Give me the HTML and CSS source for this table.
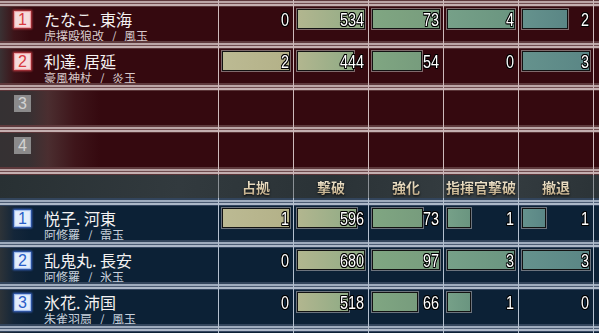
FILE: index.html
```html
<!DOCTYPE html>
<html lang="ja">
<head>
<meta charset="utf-8">
<title>Score board</title>
<link rel="stylesheet" href="styles.css">
</head>
<body>
<div class="board">
  <section class="team red">
    <div class="sep first"><i></i><i></i><i></i><i></i><i></i><i></i><i></i></div>
    <div class="row">
      <div class="name"><span class="rank">1</span><div class="who"><div class="pn">たなこ. 東海</div><div class="sub">虎撲殴狼改 / 風玉</div></div></div>
      <div class="c"><span class="n">0</span></div>
      <div class="c"><span class="bar b2" style="width:68px"></span><span class="n">534</span></div>
      <div class="c"><span class="bar b3" style="width:68px"></span><span class="n">73</span></div>
      <div class="c"><span class="bar b4" style="width:68px"></span><span class="n">4</span></div>
      <div class="c"><span class="bar b5" style="width:46px"></span><span class="n">2</span></div>
      <div class="c end"></div>
    </div>
    <div class="sep"><i></i><i></i><i></i><i></i><i></i><i></i><i></i></div>
    <div class="row">
      <div class="name"><span class="rank">2</span><div class="who"><div class="pn">利達. 居延</div><div class="sub">豪風神杖 / 炎玉</div></div></div>
      <div class="c"><span class="bar b1" style="width:68px"></span><span class="n">2</span></div>
      <div class="c"><span class="bar b2" style="width:57px"></span><span class="n">444</span></div>
      <div class="c"><span class="bar b3" style="width:50px"></span><span class="n">54</span></div>
      <div class="c"><span class="n">0</span></div>
      <div class="c"><span class="bar b5" style="width:68px"></span><span class="n">3</span></div>
      <div class="c end"></div>
    </div>
    <div class="sep"><i></i><i></i><i></i><i></i><i></i><i></i><i></i></div>
    <div class="row empty">
      <div class="name"><span class="rank">3</span></div>
      <div class="c"></div><div class="c"></div><div class="c"></div><div class="c"></div><div class="c"></div>
      <div class="c end"></div>
    </div>
    <div class="sep"><i></i><i></i><i></i><i></i><i></i><i></i><i></i></div>
    <div class="row empty">
      <div class="name"><span class="rank">4</span></div>
      <div class="c"></div><div class="c"></div><div class="c"></div><div class="c"></div><div class="c"></div>
      <div class="c end"></div>
    </div>
    <div class="sep"><i></i><i></i><i></i><i></i><i></i><i></i><i></i></div>
  </section>

  <div class="head">
    <div class="hname"></div>
    <div class="h"><span class="lbl">占拠</span></div>
    <div class="h"><span class="lbl">撃破</span></div>
    <div class="h"><span class="lbl">強化</span></div>
    <div class="h"><span class="lbl">指揮官撃破</span></div>
    <div class="h"><span class="lbl">撤退</span></div>
    <div class="h end"></div>
  </div>

  <section class="team blue">
    <div class="sep"><i></i><i></i><i></i><i></i><i></i><i></i><i></i></div>
    <div class="row">
      <div class="name"><span class="rank">1</span><div class="who"><div class="pn">悦子. 河東</div><div class="sub">阿修羅 / 雷玉</div></div></div>
      <div class="c"><span class="bar b1" style="width:68px"></span><span class="n">1</span></div>
      <div class="c"><span class="bar b2" style="width:60px"></span><span class="n">596</span></div>
      <div class="c"><span class="bar b3" style="width:51px"></span><span class="n">73</span></div>
      <div class="c"><span class="bar b4" style="width:24px"></span><span class="n">1</span></div>
      <div class="c"><span class="bar b5" style="width:24px"></span><span class="n">1</span></div>
      <div class="c end"></div>
    </div>
    <div class="sep"><i></i><i></i><i></i><i></i><i></i><i></i><i></i></div>
    <div class="row">
      <div class="name"><span class="rank">2</span><div class="who"><div class="pn">乱鬼丸. 長安</div><div class="sub">阿修羅 / 氷玉</div></div></div>
      <div class="c"><span class="n">0</span></div>
      <div class="c"><span class="bar b2" style="width:68px"></span><span class="n">680</span></div>
      <div class="c"><span class="bar b3" style="width:68px"></span><span class="n">97</span></div>
      <div class="c"><span class="bar b4" style="width:68px"></span><span class="n">3</span></div>
      <div class="c"><span class="bar b5" style="width:68px"></span><span class="n">3</span></div>
      <div class="c end"></div>
    </div>
    <div class="sep"><i></i><i></i><i></i><i></i><i></i><i></i><i></i></div>
    <div class="row">
      <div class="name"><span class="rank">3</span><div class="who"><div class="pn">氷花. 沛国</div><div class="sub">朱雀羽扇 / 風玉</div></div></div>
      <div class="c"><span class="n">0</span></div>
      <div class="c"><span class="bar b2" style="width:52px"></span><span class="n">518</span></div>
      <div class="c"><span class="bar b3" style="width:46px"></span><span class="n">66</span></div>
      <div class="c"><span class="bar b4" style="width:24px"></span><span class="n">1</span></div>
      <div class="c"><span class="n">0</span></div>
      <div class="c end"></div>
    </div>
    <div class="sep"><i></i><i></i><i></i><i></i><i></i><i></i><i></i></div>
    <div class="row tail"><div class="name"></div><div class="c"></div><div class="c"></div><div class="c"></div><div class="c"></div><div class="c"></div><div class="c end"></div></div>
  </section>
</div>
</body>
</html>
```

FILE: styles.css
```css
html, body {
  margin: 0;
  padding: 0;
  background: #2c3336;
}
.board {
  width: 599px;
  height: 333px;
  overflow: hidden;
  font-family: "Noto Sans CJK JP", "Noto Sans", sans-serif;
}
.team { display: flex; flex-direction: column; }

.row, .sep, .head {
  display: grid;
  grid-template-columns: 218px repeat(5, 75px) 6px;
}

/* separators */
.sep { height: 8px; }
.sep.first { margin-top: -1px; }
.sep i { display: block; }
.sep i + i { border-left: 1px solid var(--vline); }

.red {
  --vline: #cdb9ba;
  --content: #35090f;
}
.blue {
  --vline: #b4c0cf;
  --content: #0c2136;
}
.red .sep {
  background: linear-gradient(to bottom,
    #5e393c 0, #5e393c 2px,
    #bba5a6 2px, #bba5a6 4px,
    #6f4b4e 4px, #6f4b4e 5px,
    #c4afb0 5px, #c4afb0 7px,
    #5a3437 7px, #5a3437 8px);
}
.blue .sep {
  background: linear-gradient(to bottom,
    #33455c 0, #33455c 2px,
    #9eabbd 2px, #9eabbd 4px,
    #4a5a72 4px, #4a5a72 5px,
    #adb8c8 5px, #adb8c8 7px,
    #33455f 7px, #33455f 8px);
}

/* content rows */
.row { height: 34px; }
.red .row {
  background: linear-gradient(to right, #3a3133 0, #3d1419 14px, #35090f 30px);
}
.red .row.empty {
  background: linear-gradient(to right, #353133 0, #373133 28px, #4b2e30 48px, #3e151a 75px, #35090f 100px);
}
.blue .row {
  background: linear-gradient(to right, #2d3338 0, #142639 14px, #0c2136 30px);
}
.row.tail { height: 1px; }

.c {
  border-left: 1px solid var(--vline);
  display: grid;
  grid-template-columns: 1fr;
  grid-template-rows: 20px;
  padding: 2px 3px 0 3px;
}
.c.end { padding: 0; }

.bar {
  grid-area: 1 / 1;
  justify-self: start;
  height: 20px;
  box-sizing: border-box;
  border: 1px solid #121212;
  box-shadow: 0 0 0 1px rgba(190, 185, 185, 0.55);
}
.b1 { background: linear-gradient(to right, #bcba93, #b3b188); }
.b2 { background: linear-gradient(to right, #b2b68f, #8fab85); }
.b3 { background: linear-gradient(to right, #80a682, #779c7d); }
.b4 { background: linear-gradient(to right, #76a088, #6a9580); }
.b5 { background: linear-gradient(to right, #65928d, #5a8685); }

.n {
  grid-area: 1 / 1;
  justify-self: end;
  align-self: start;
  margin-top: 2px;
  margin-right: 1px;
  font-family: "Liberation Sans", Arial, sans-serif;
  font-size: 18px;
  line-height: 18px;
  color: #ffffff;
  transform: scaleX(0.8);
  transform-origin: right center;
  text-shadow:
    1px 0 0 #000, -1px 0 0 #000, 0 1px 0 #000, 0 -1px 0 #000,
    1px 1px 0 #000, -1px -1px 0 #000, 1px -1px 0 #000, -1px 1px 0 #000;
}

/* name column */
.name {
  display: flex;
  align-items: flex-start;
  gap: 13px;
  padding: 4px 0 0 14px;
}
.rank {
  flex: none;
  width: 17px;
  height: 17px;
  box-sizing: border-box;
  font-family: "Liberation Sans", Arial, sans-serif;
  font-size: 16px;
  line-height: 17px;
  text-align: center;
}
.red .rank {
  background: #f6dcdc;
  color: #d93a3f;
  box-shadow: 0 0 2px 1px #c83c44, inset 0 0 1px 1px #ec9ca0;
}
.blue .rank {
  background: #e4eefc;
  color: #2a5ec8;
  box-shadow: 0 0 2px 1px #3c6ad0, inset 0 0 1px 1px #9cb8ec;
}
.red .row.empty .rank {
  background: #8b8a8b;
  color: #d2d2d2;
  box-shadow: none;
}
.who { display: flex; flex-direction: column; }
.pn {
  font-size: 16px;
  line-height: 16px;
  color: #f4f2f2;
  white-space: nowrap;
}
.sub {
  margin-top: 3px;
  font-size: 12px;
  line-height: 12px;
  word-spacing: 5px;
  white-space: nowrap;
}
.red .sub { color: #d8cacb; }
.blue .sub { color: #c8d1dc; }

/* header */
.head {
  height: 23px;
  background: linear-gradient(100deg, #283033 0, #323a3e 30%, #2a3236 55%, #363e42 80%, #2b3337 100%);
}
.h {
  border-left: 1px solid #8b9196;
  display: flex;
  justify-content: center;
  padding-top: 5px;
}
.lbl {
  font-size: 14px;
  line-height: 14px;
  font-weight: 700;
  white-space: nowrap;
  background: linear-gradient(to bottom, #f3ead4 0, #d8c6a4 55%, #a8916e 100%);
  -webkit-background-clip: text;
  background-clip: text;
  color: transparent;
  filter: drop-shadow(0 1px 1px rgba(0, 0, 0, 0.85));
}
```
